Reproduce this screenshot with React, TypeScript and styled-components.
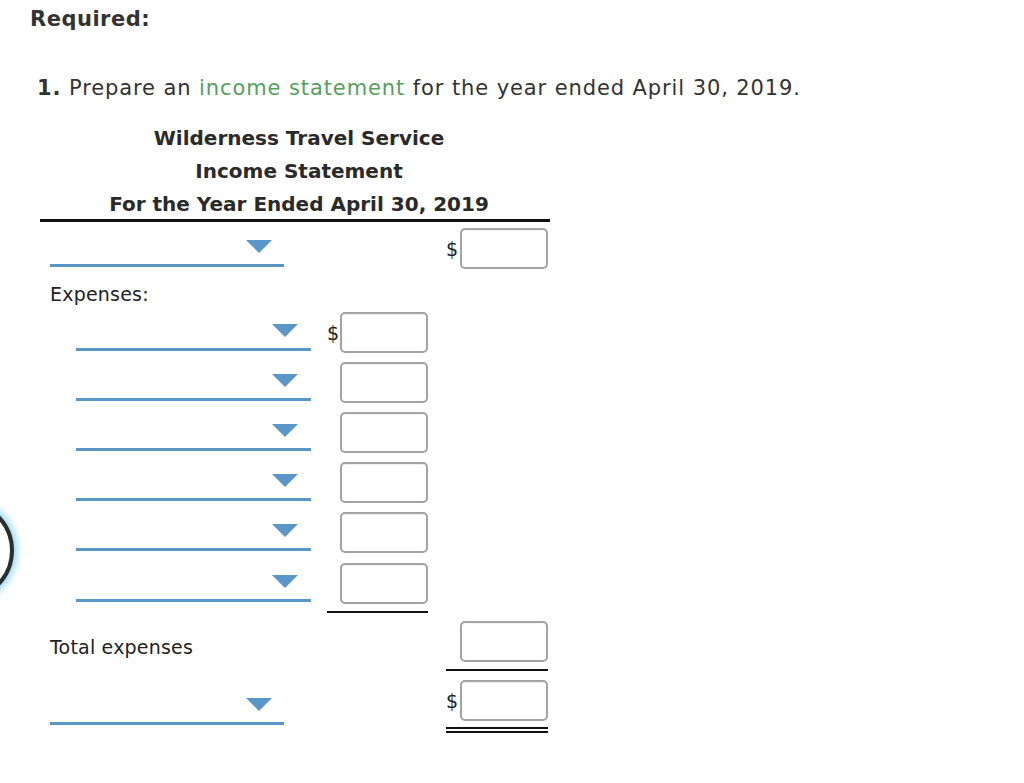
import React, { FC } from 'react'
import styled, { createGlobalStyle } from 'styled-components'

const GlobalStyle = createGlobalStyle`
  html, body {
    margin: 0;
    padding: 0;
    background: #fff;
  }
  body {
    font-family: 'DejaVu Sans', Verdana, sans-serif;
    color: #333;
  }
`

const Page = styled.div`
  position: relative;
  width: 1024px;
  height: 783px;
  overflow: hidden;
  padding-left: 30px;
  box-sizing: border-box;
`

const FocusRing = styled.div`
  position: absolute;
  left: -87px;
  top: 500px;
  width: 101px;
  height: 101px;
  box-sizing: border-box;
  border: 4px solid #2d2d2d;
  border-radius: 50%;
  box-shadow: 0 0 7px 3px rgba(110, 200, 255, 0.75);
`

const Required = styled.div`
  font-weight: bold;
  font-size: 21px;
  letter-spacing: 0.5px;
  line-height: 24px;
  padding-top: 7px;
  color: #333;
`

const Instruction = styled.div`
  font-size: 21px;
  letter-spacing: 0.9px;
  line-height: 24px;
  margin-top: 45px;
  padding-left: 7px;
  color: #333;
  b {
    font-weight: bold;
  }
`

const Link = styled.span`
  color: #56a05e;
`

const Sheet = styled.div`
  width: 510px;
  margin-left: 10px;
  margin-top: 18px;
`

const HeadingBlock = styled.div`
  padding-top: 4px;
`

const Heading = styled.div`
  font-weight: bold;
  font-size: 20px;
  line-height: 33px;
  text-align: center;
  padding-left: 8px;
  color: #2a2a2a;
`

const Rule = styled.div`
  height: 3px;
  background: #111;
  margin-top: -2px;
`

const Row = styled.div<{ $gap: number }>`
  display: flex;
  align-items: flex-start;
  margin-top: ${(p) => p.$gap}px;
`

const LabelCell = styled.div<{ $indent: number }>`
  width: 286px;
  height: 41px;
  box-sizing: border-box;
  padding-left: ${(p) => p.$indent}px;
  display: flex;
  align-items: flex-end;
`

const Label = styled.div<{ $top?: number }>`
  width: 286px;
  font-size: 19px;
  line-height: 22px;
  letter-spacing: 0.2px;
  padding-left: 10px;
  padding-top: ${(p) => p.$top ?? 0}px;
  box-sizing: border-box;
  color: #222;
`

const Select = styled.div<{ $width: number; $right: number; $drop?: number }>`
  width: ${(p) => p.$width}px;
  height: 26px;
  box-sizing: border-box;
  border-bottom: 3px solid #5b96c8;
  margin-bottom: ${(p) => p.$drop ?? 2}px;
  display: flex;
  justify-content: flex-end;
  align-items: flex-start;
  padding-right: ${(p) => p.$right}px;
`

const Spacer = styled.div`
  width: 104px;
  flex: none;
`

const AmountCell = styled.div<{ $offset: number; $width: number; $line?: Line }>`
  flex: none;
  width: ${(p) => p.$width}px;
  margin-left: ${(p) => p.$offset}px;
  margin-right: 2px;
  display: flex;
  align-items: center;
  ${(p) => p.$line === 'single' && 'padding-bottom: 7px; border-bottom: 2px solid #111;'}
  ${(p) => p.$line === 'double' && 'padding-bottom: 6px; border-bottom: 6px double #111;'}
`

const Dollar = styled.span<{ $hidden?: boolean; $width: number }>`
  width: ${(p) => p.$width}px;
  flex: none;
  font-size: 19px;
  line-height: 22px;
  color: #222;
  visibility: ${(p) => (p.$hidden ? 'hidden' : 'visible')};
`

const Box = styled.div`
  width: 88px;
  height: 41px;
  flex: none;
  box-sizing: border-box;
  border: 2px solid #a3a3a3;
  border-radius: 5px;
  background: #fff;
  box-shadow: inset 0 1px 1px rgba(0, 0, 0, 0.06);
`

type Line = 'single' | 'double' | undefined

const Caret: FC = () => (
  <svg width="26" height="14" viewBox="0 0 26 14" style={{ display: 'block', marginTop: -1 }}>
    <polygon points="0,0 26,0 13,13" fill="#5b96c8" />
  </svg>
)

const TopRow: FC<{ gap: number; dollar?: boolean; line?: Line; drop?: number }> = ({ gap, dollar, line, drop }) => (
  <Row $gap={gap}>
    <LabelCell $indent={10}>
      <Select $width={234} $right={12} $drop={drop}>
        <Caret />
      </Select>
    </LabelCell>
    <Spacer />
    <AmountCell $offset={16} $width={102} $line={line}>
      <Dollar $width={14} $hidden={!dollar}>$</Dollar>
      <Box />
    </AmountCell>
  </Row>
)

const ExpenseRow: FC<{ gap: number; dollar?: boolean; line?: Line }> = ({ gap, dollar, line }) => (
  <Row $gap={gap}>
    <LabelCell $indent={36}>
      <Select $width={235} $right={13}>
        <Caret />
      </Select>
    </LabelCell>
    <AmountCell $offset={1} $width={101} $line={line}>
      <Dollar $width={13} $hidden={!dollar}>$</Dollar>
      <Box />
    </AmountCell>
  </Row>
)

const App: FC = () => (
  <>
    <GlobalStyle />
    <Page>
      <FocusRing />
      <Required>Required:</Required>
      <Instruction>
        <b>1.</b> Prepare an <Link>income statement</Link> for the year ended April 30, 2019.
      </Instruction>
      <Sheet>
        <HeadingBlock>
          <Heading>Wilderness Travel Service</Heading>
          <Heading>Income Statement</Heading>
          <Heading>For the Year Ended April 30, 2019</Heading>
        </HeadingBlock>
        <Rule />
        <TopRow gap={6} dollar />
        <Label style={{ marginTop: 14 }}>Expenses:</Label>
        <ExpenseRow gap={7} dollar />
        <ExpenseRow gap={9} />
        <ExpenseRow gap={9} />
        <ExpenseRow gap={9} />
        <ExpenseRow gap={9} />
        <ExpenseRow gap={10} line="single" />
        <Row $gap={8}>
          <Label $top={15}>Total expenses</Label>
          <Spacer />
          <AmountCell $offset={16} $width={102} $line="single">
            <Dollar $width={14} $hidden>$</Dollar>
            <Box />
          </AmountCell>
        </Row>
        <TopRow gap={9} dollar line="double" drop={-4} />
      </Sheet>
    </Page>
  </>
)

export default App
